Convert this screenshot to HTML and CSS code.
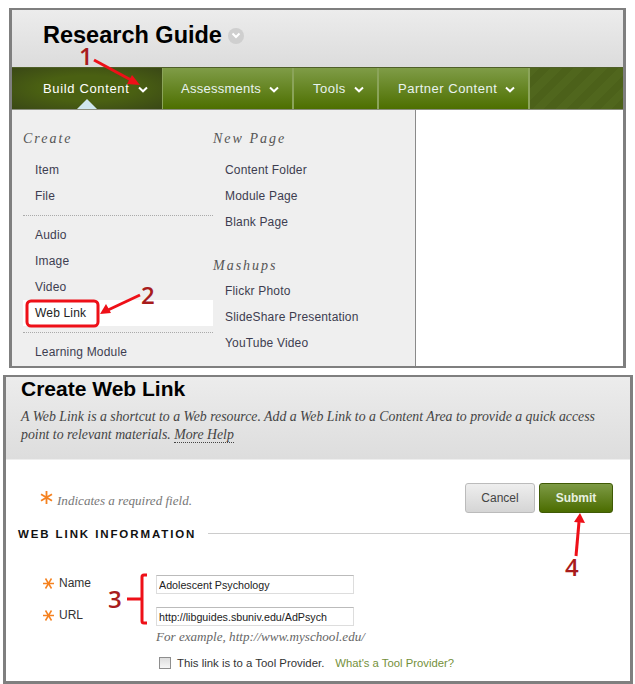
FILE: index.html
```html
<!DOCTYPE html>
<html lang="en">
<head>
<meta charset="utf-8">
<title>Research Guide</title>
<link rel="stylesheet" href="styles.css">
</head>
<body>
<section class="panel panel-top">
  <header class="course-head">
    <h1>Research Guide</h1>
    <span class="title-menu"><svg width="10" height="7" viewBox="0 0 10 7"><path d="M1.500 1.500 5 5l3.500-3.500" fill="none" stroke="#fff" stroke-width="2"/></svg></span>
  </header>
  <nav class="tabs">
    <a class="tab tab-active"><span>Build Content</span><svg class="chev" width="10" height="7" viewBox="0 0 10 7"><path d="M1 1.500 5 5.300l4-3.800" fill="none" stroke="#fff" stroke-width="2"/></svg></a>
    <a class="tab tab-assess"><span>Assessments</span><svg class="chev" width="10" height="7" viewBox="0 0 10 7"><path d="M1 1.500 5 5.300l4-3.800" fill="none" stroke="#fff" stroke-width="2"/></svg></a>
    <a class="tab tab-tools"><span>Tools</span><svg class="chev" width="10" height="7" viewBox="0 0 10 7"><path d="M1 1.500 5 5.300l4-3.800" fill="none" stroke="#fff" stroke-width="2"/></svg></a>
    <a class="tab tab-partner"><span>Partner Content</span><svg class="chev" width="10" height="7" viewBox="0 0 10 7"><path d="M1 1.500 5 5.300l4-3.800" fill="none" stroke="#fff" stroke-width="2"/></svg></a>
    <span class="tabs-fill"></span>
  </nav>
  <div class="menu">
    <div class="menu-col menu-left">
      <h2 class="menu-title">Create</h2>
      <a class="menu-item">Item</a>
      <a class="menu-item">File</a>
      <hr class="menu-rule">
      <a class="menu-item">Audio</a>
      <a class="menu-item">Image</a>
      <a class="menu-item">Video</a>
      <a class="menu-item menu-item-on">Web Link</a>
      <hr class="menu-rule">
      <a class="menu-item">Learning Module</a>
    </div>
    <div class="menu-col">
      <h2 class="menu-title">New Page</h2>
      <a class="menu-item">Content Folder</a>
      <a class="menu-item">Module Page</a>
      <a class="menu-item">Blank Page</a>
      <h2 class="menu-title menu-title-next">Mashups</h2>
      <a class="menu-item">Flickr Photo</a>
      <a class="menu-item">SlideShare Presentation</a>
      <a class="menu-item">YouTube Video</a>
    </div>
  </div>
</section>

<section class="panel panel-form">
  <header class="form-head">
    <h1>Create Web Link</h1>
    <p>A Web Link is a shortcut to a Web resource. Add a Web Link to a Content Area to provide a quick access point to relevant materials. <a class="help">More Help</a></p>
  </header>
  <div class="form-bar">
    <p class="required"><svg class="star star-big" width="13" height="13" viewBox="0 0 13 13"><path d="M6.500 0v13M1 3.300l11 6.400M12 3.300 1 9.700" fill="none" stroke="#f58220" stroke-width="1.800"/></svg>Indicates a required field.</p>
    <div class="buttons">
      <button class="btn btn-cancel" type="button">Cancel</button>
      <button class="btn btn-submit" type="button">Submit</button>
    </div>
  </div>
  <div class="section-head">
    <h2>WEB LINK INFORMATION</h2>
    <span class="section-line"></span>
  </div>
  <div class="fields">
    <label class="field-label"><svg class="star" width="11" height="11" viewBox="0 0 11 11"><path d="M0 5.500h11M2.500 0.500l6 10M8.500 0.500l-6 10" fill="none" stroke="#f58220" stroke-width="1.500"/></svg>Name</label>
    <input class="field-input" type="text" value="Adolescent Psychology">
    <label class="field-label"><svg class="star" width="11" height="11" viewBox="0 0 11 11"><path d="M0 5.500h11M2.500 0.500l6 10M8.500 0.500l-6 10" fill="none" stroke="#f58220" stroke-width="1.500"/></svg>URL</label>
    <input class="field-input" type="text" value="http://libguides.sbuniv.edu/AdPsych">
    <p class="hint">For example, http://www.myschool.edu/</p>
  </div>
  <div class="tool-row">
    <span class="check"></span>
    <span class="tool-text">This link is to a Tool Provider.</span>
    <a class="tool-link">What's a Tool Provider?</a>
  </div>
</section>

<svg class="notes" width="635" height="684" viewBox="0 0 635 684">
  <g fill="none" stroke="#ee1018" stroke-width="3">
    <path d="M94 60 131 80"/>
    <path d="M140 295 108 310"/>
    <path d="M576 556 579 522"/>
    <rect x="27" y="301" width="71" height="25" rx="4"/>
    <path d="M147 575h-3q-2 0-2 2v44q0 2 2 2h3M127 599h15"/>
  </g>
  <g fill="#ee1018">
    <path d="M140 85 127 84 132 75Z"/>
    <path d="M100 314 106 304 111 313Z"/>
    <path d="M580 513 585 523 574 522Z"/>
  </g>
  <g class="note-num">
    <text x="79" y="65">1</text>
    <text x="141" y="304">2</text>
    <text x="108" y="608">3</text>
    <text x="565" y="576">4</text>
  </g>
</svg>
</body>
</html>
```
FILE: styles.css
```css
* { box-sizing: border-box; }
html, body { margin: 0; padding: 0; }
body {
  position: relative;
  width: 635px;
  height: 684px;
  padding-top: 8px;
  background: #fff;
  overflow: hidden;
  font-family: "Liberation Sans", Arial, sans-serif;
  color: #333;
}
.panel { background: #fff; border: solid #7f7f7f; overflow: hidden; }
.panel-top { width: 617px; height: 360px; margin-left: 9px; border-width: 2px 3px; }
.panel-form { width: 630px; height: 309px; margin: 7px 0 0 3px; border-width: 2px 3px 3px; }

.course-head {
  height: 57px;
  display: flex;
  align-items: center;
  gap: 6px;
  padding: 0 0 6px 31px;
  background: linear-gradient(#ececec, #dcdcdc);
}
.course-head h1 { margin: 0; font-size: 23.500px; font-weight: 700; color: #000; }
.title-menu {
  width: 16px; height: 16px; border-radius: 50%;
  background: #cfcfcf;
  display: flex; align-items: center; justify-content: center;
}

.tabs { display: flex; height: 43px; border-top: 1px solid #4f5f28; border-bottom: 1px solid #8b8f80; }
.tab {
  position: relative;
  display: flex; align-items: center; gap: 8px;
  padding: 0 0 0 19px;
  font-size: 13px; letter-spacing: .5px; color: #e9f3f0;
  background: linear-gradient(#7f9c47, #4d6f00);
  border-right: 2px solid #8ba45a;
}
.tab-active { width: 151px; padding-left: 31px; letter-spacing: .65px; color: #fff; background: radial-gradient(ellipse at center, #4a6012 45%, #3a4816 100%); border-right: 1px solid #8ba45a; }
.tab-active::after {
  content: "";
  position: absolute; left: 65px; bottom: 0;
  border: solid transparent; border-width: 0 10px 10px;
  border-bottom-color: #cfe6ee;
}
.tab-assess { width: 131px; padding-left: 18px; letter-spacing: .25px; }
.tab-tools { width: 85px; }
.tab-partner { width: 151px; }
.chev { margin-top: 1px; }
.tabs-fill {
  flex: 1;
  background: repeating-linear-gradient(-45deg, #4c611a 0 8px, #50661d 8px 16px);
}

.menu {
  width: 404px; height: 256px;
  display: flex;
  padding: 18px 0 0 11px;
  background: #efefef;
  border-right: 1px solid #8a8a8a;
  overflow: hidden;
}
.menu-col { display: flex; flex-direction: column; }
.menu-left { width: 190px; flex: none; }
.menu-title {
  height: 20px; margin: 1px 0 8px;
  font: italic 400 14px/20px "Liberation Serif", serif;
  letter-spacing: 2px; color: #555;
}
.menu-title-next { margin: 21px 0 2px; }
.menu-item {
  display: block; flex: none; height: 26px; padding-left: 12px;
  font-size: 12px; line-height: 26px; letter-spacing: .18px; color: #3d3d50;
}
.menu-item-on { background: #fff; color: #222; }
.menu-rule { width: 100%; height: 0; flex: none; margin: 6px 0; border: 0; border-top: 1px dotted #aaa; }

.form-head {
  height: 83px;
  padding: 0 0 0 15px;
  background: linear-gradient(#ececec, #dddddd);
  border-bottom: 1px solid #eee;
}
.form-head h1 { margin: 0; font-size: 21px; line-height: 24px; font-weight: 700; color: #000; }
.form-head p {
  margin: 7px 20px 0 0;
  font: italic 400 13.800px/18px "Liberation Serif", serif;
  color: #444;
}
.help { border-bottom: 1px dotted #444; }

.form-bar {
  display: flex; justify-content: space-between; align-items: flex-start;
  padding: 23px 17px 0 33px;
}
.required { display: flex; align-items: flex-start; margin: 8px 0 0; font: italic 400 13.100px/20px "Liberation Serif", serif; color: #777; }
.star { flex: none; }
.star-big { margin: 0 4px 0 1px; }
.buttons { display: flex; gap: 4px; }
.btn {
  height: 30px; padding: 0; border-radius: 3px;
  font: 400 12px "Liberation Sans", sans-serif;
}
.btn-cancel { width: 70px; color: #444; border: 1px solid #bbb; background: linear-gradient(#eee, #d5d5d5); }
.btn-submit { width: 74px; color: #e8f0e0; font-weight: 700; border: 1px solid #3f5a05; background: linear-gradient(#7d9a45, #4b6c00); }

.section-head { display: flex; align-items: center; gap: 12px; margin-top: 13px; padding-left: 12px; }
.section-head h2 { margin: 0; font-size: 11.500px; line-height: 16px; font-weight: 700; letter-spacing: 1.900px; color: #111; white-space: nowrap; }
.section-line { flex: 1; height: 1px; background: #ccc; margin-top: -2px; }

.fields {
  display: grid;
  grid-template-columns: 150px 198px;
  grid-template-rows: 19px 19px auto;
  row-gap: 13px;
  margin-top: 33px;
}
.field-label { display: flex; align-items: flex-start; padding-left: 37px; font-size: 12px; line-height: 16px; color: #333; }
.field-label .star { margin: 3px 5px 0 0; }
.field-input {
  width: 198px; height: 19px; padding: 0 2px;
  border: 1px solid #ddd; border-top-color: #bbb;
  font: 400 10.700px "Liberation Sans", sans-serif; color: #222;
  background: #fff;
}
.hint { grid-column: 2; margin: -11px 0 0; white-space: nowrap; font: italic 400 13.100px/18px "Liberation Serif", serif; color: #666; }

.tool-row { display: flex; align-items: center; margin-top: 11px; padding-left: 153px; }
.check { width: 12px; height: 12px; border: 1px solid #8e8e8e; background: linear-gradient(#ddd, #f6f6f6); }
.tool-text { margin-left: 6px; font-size: 11.400px; color: #333; }
.tool-link { margin-left: 11px; font-size: 11.300px; color: #74903a; }

.notes { position: absolute; left: 0; top: 0; pointer-events: none; }
.note-num text { font: 600 24px "Open Sans", sans-serif; fill: #a81c1c; }
```
